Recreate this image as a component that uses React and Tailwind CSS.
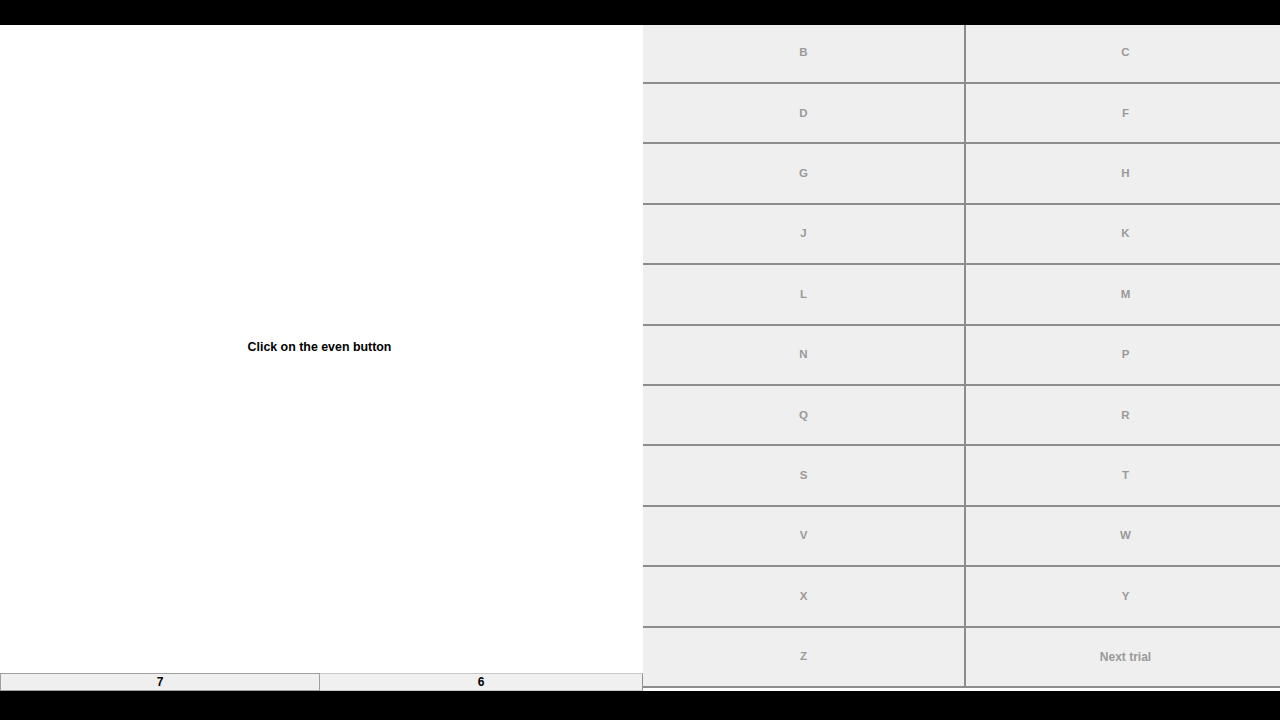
import React from 'react';

const letters = [
  'B', 'C', 'D', 'F', 'G', 'H', 'J', 'K', 'L', 'M', 'N',
  'P', 'Q', 'R', 'S', 'T', 'V', 'W', 'X', 'Y', 'Z', 'Next trial',
];

const App = () => {
  return (
    <div className="w-[1280px] h-[720px] bg-black flex flex-col overflow-hidden" style={{ fontFamily: '"Liberation Sans", Arial, sans-serif' }}>
      <div className="h-[25px] shrink-0" />

      <div className="flex h-[666px] bg-white">
        {/* prompt side */}
        <div className="w-[643px] flex flex-col">
          <div className="flex-1 flex items-center justify-center pb-[4px] pr-[4px]">
            <p className="text-[12.4px] font-bold text-black">Click on the even button</p>
          </div>
          <div className="flex h-[18px]">
            <button className="w-[320px] bg-[#efefef] border border-[#a0a0a0] text-[12px] font-bold text-black leading-none">
              7
            </button>
            <button className="flex-1 bg-[#f0f0f0] border-y border-r border-[#c8c8c8] border-r-[#909090] text-[12px] font-bold text-black leading-none">
              6
            </button>
          </div>
        </div>

        {/* response keys */}
        <div className="flex-1 pb-[3px]">
          <div className="grid grid-cols-[323px_1fr] grid-rows-[59px_repeat(10,60.4px)]">
            {letters.map((label, i) => (
              <button
                key={label}
                disabled
                className={`bg-[#efefef] border-b-2 border-[#8c8c8c] flex items-center justify-center text-[#9a9a9a] font-bold ${
                  i % 2 === 0 ? 'border-r-2' : 'pl-[5px]'
                } ${i < 2 ? 'pb-[2px]' : ''} ${label === 'Next trial' ? 'text-[12px]' : 'text-[11.5px]'}`}
              >
                {label}
              </button>
            ))}
          </div>
        </div>
      </div>
    </div>
  );
};

export default App;
